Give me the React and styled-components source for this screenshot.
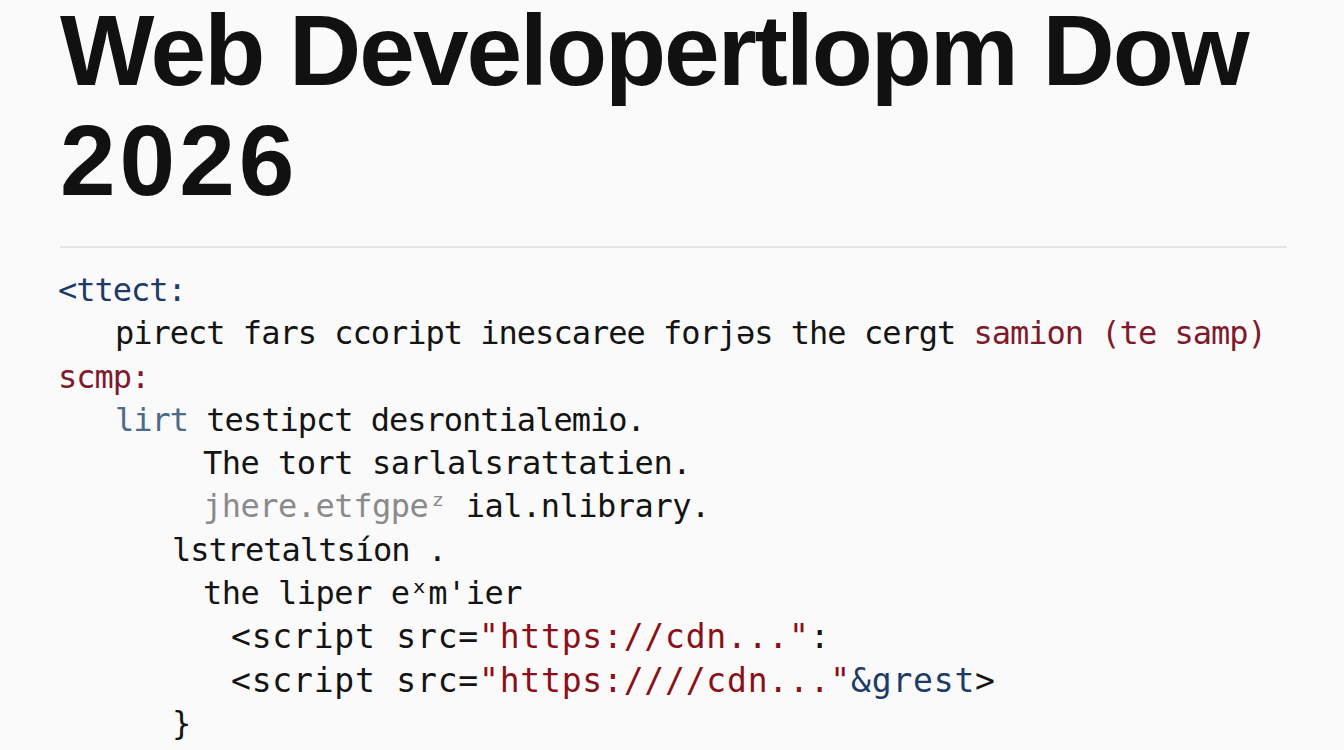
import React from 'react'
import styled, { createGlobalStyle } from 'styled-components'

const Global = createGlobalStyle`
  html, body {
    margin: 0;
    padding: 0;
    background: #fafafa;
    overflow: hidden;
  }
`

const lines = [
  { indent: 0, parts: [{ t: '<ttect:', c: 'blue' }] },
  {
    indent: 57,
    parts: [
      { t: 'pirect fars ccoript inescaree forjəs the cergt ' },
      { t: 'samion (te samp)', c: 'red' },
    ],
  },
  { indent: 0, parts: [{ t: 'scmp:', c: 'red' }] },
  { indent: 57, parts: [{ t: 'lirt', c: 'slate' }, { t: ' testipct desrontialemio.' }] },
  { indent: 145, spread: 'mid', parts: [{ t: 'The tort sarlalsrattatien.' }] },
  { indent: 145, spread: 'mid', parts: [{ t: 'jhere.etfgpeᶻ ', c: 'gray' }, { t: 'ial.nlibrary.' }] },
  { indent: 114, parts: [{ t: 'lstretaltsíon .' }] },
  { indent: 145, spread: 'mid', parts: [{ t: 'the liper eˣm\'ier' }] },
  {
    indent: 173,
    spread: 'wide',
    parts: [
      { t: '<script src=' },
      { t: '"https://cdn..."', c: 'string' },
      { t: ':' },
    ],
  },
  {
    indent: 173,
    spread: 'wide',
    parts: [
      { t: '<script src=' },
      { t: '"https:////cdn..."', c: 'string' },
      { t: '&grest', c: 'blue' },
      { t: '>' },
    ],
  },
  { indent: 114, parts: [{ t: '}' }] },
]

function App() {
  return (
    <Page>
      <Global />
      <Title>
        <TitleLine>Web Developertlopm Dow</TitleLine>
        <TitleLine $second>2026</TitleLine>
      </Title>
      <Divider />
      <Code>
        {lines.map((line, i) => (
          <Line key={i} $indent={line.indent} $spread={line.spread}>
            {line.parts.map((p, j) => (
              <Token key={j} $kind={p.c}>
                {p.t}
              </Token>
            ))}
          </Line>
        ))}
      </Code>
    </Page>
  )
}

export default App

const colors = {
  blue: '#1e3a66',
  red: '#7e1a2c',
  slate: '#4d6a8c',
  gray: '#8a8a8a',
  string: '#8a1018',
}

const spreads = {
  mid: { size: 32, spacing: -0.5 },
  wide: { size: 33, spacing: 0.8 },
}

const Page = styled.div`
  width: 1344px;
  height: 750px;
  box-sizing: border-box;
  padding: 0 57px 0 60px;
  background: #fafafa;
  overflow: hidden;
`
const Title = styled.h1`
  margin: 0;
  font-family: 'Liberation Sans', Arial, sans-serif;
  font-weight: 700;
  font-size: 100px;
  color: #111;
`
const TitleLine = styled.span`
  display: block;
  line-height: 100px;
  margin-top: ${(p) => (p.$second ? '10px' : '0')};
  letter-spacing: ${(p) => (p.$second ? '4px' : '-2px')};
`
const Divider = styled.hr`
  margin: 36px 0 0;
  border: none;
  height: 2px;
  background: #e6e6e6;
`
const Code = styled.div`
  margin-top: 21px;
  margin-left: -2px;
  font-family: 'DejaVu Sans Mono', 'Liberation Mono', monospace;
  font-size: 32px;
  line-height: 43.3px;
  letter-spacing: -1px;
  color: #141414;
`
const Line = styled.div`
  padding-left: ${(p) => p.$indent}px;
  white-space: pre;
  font-size: ${(p) => (p.$spread ? spreads[p.$spread].size : 32)}px;
  letter-spacing: ${(p) => (p.$spread ? spreads[p.$spread].spacing : -1)}px;
`
const Token = styled.span`
  color: ${(p) => (p.$kind ? colors[p.$kind] : 'inherit')};
`
